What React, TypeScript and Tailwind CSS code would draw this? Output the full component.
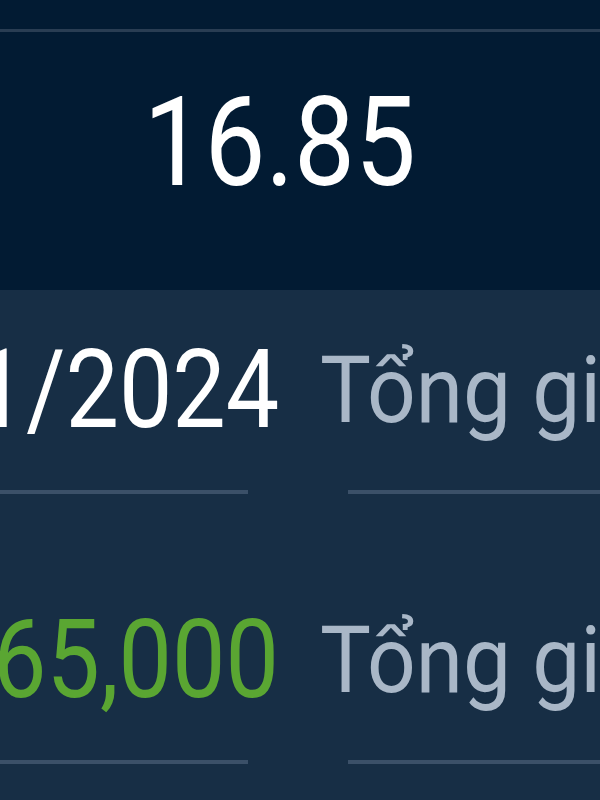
import React from 'react'

const rows = [
  { value: '11/2024', color: 'text-white', label: 'Tổng giá trị' },
  { value: '1,265,000', color: 'text-[#5aa632]', label: 'Tổng giá trị' },
]

export default function App() {
  return (
    <div className="w-[600px] h-[800px] overflow-hidden bg-[#172e45] font-['Roboto',sans-serif]">
      {/* Header */}
      <div className="h-[290px] bg-[#021b33] pt-[29px]">
        <div className="h-[3px] bg-[#293d53]" />
        <div className="mt-[49px] pr-[40px] text-center text-[124px] leading-none text-white">
          <span className="inline-block origin-center scale-x-[0.875]">16.85</span>
        </div>
      </div>

      {/* Summary rows */}
      {rows.map((row, i) => (
        <div key={i} className="grid h-[270px] grid-cols-2">
          <div className="flex flex-col overflow-hidden">
            <div className="mt-[45px] flex h-[110px] justify-end pr-[21px] text-[110px] leading-none whitespace-nowrap">
              <span className={`inline-block origin-right scale-x-[0.865] ${row.color}`}>{row.value}</span>
            </div>
            <div className="mr-[52px] mt-[45px] h-[4px] bg-[#3b5068]" />
          </div>
          <div className="flex flex-col overflow-hidden">
            <div className="mt-[55px] h-[92px] pl-[20px] text-[92px] leading-none whitespace-nowrap text-[#a9b7c7]">
              <span className="inline-block origin-left scale-x-[0.93]">{row.label}</span>
            </div>
            <div className="ml-[48px] mt-[53px] h-[4px] bg-[#3b5068]" />
          </div>
        </div>
      ))}
    </div>
  )
}
